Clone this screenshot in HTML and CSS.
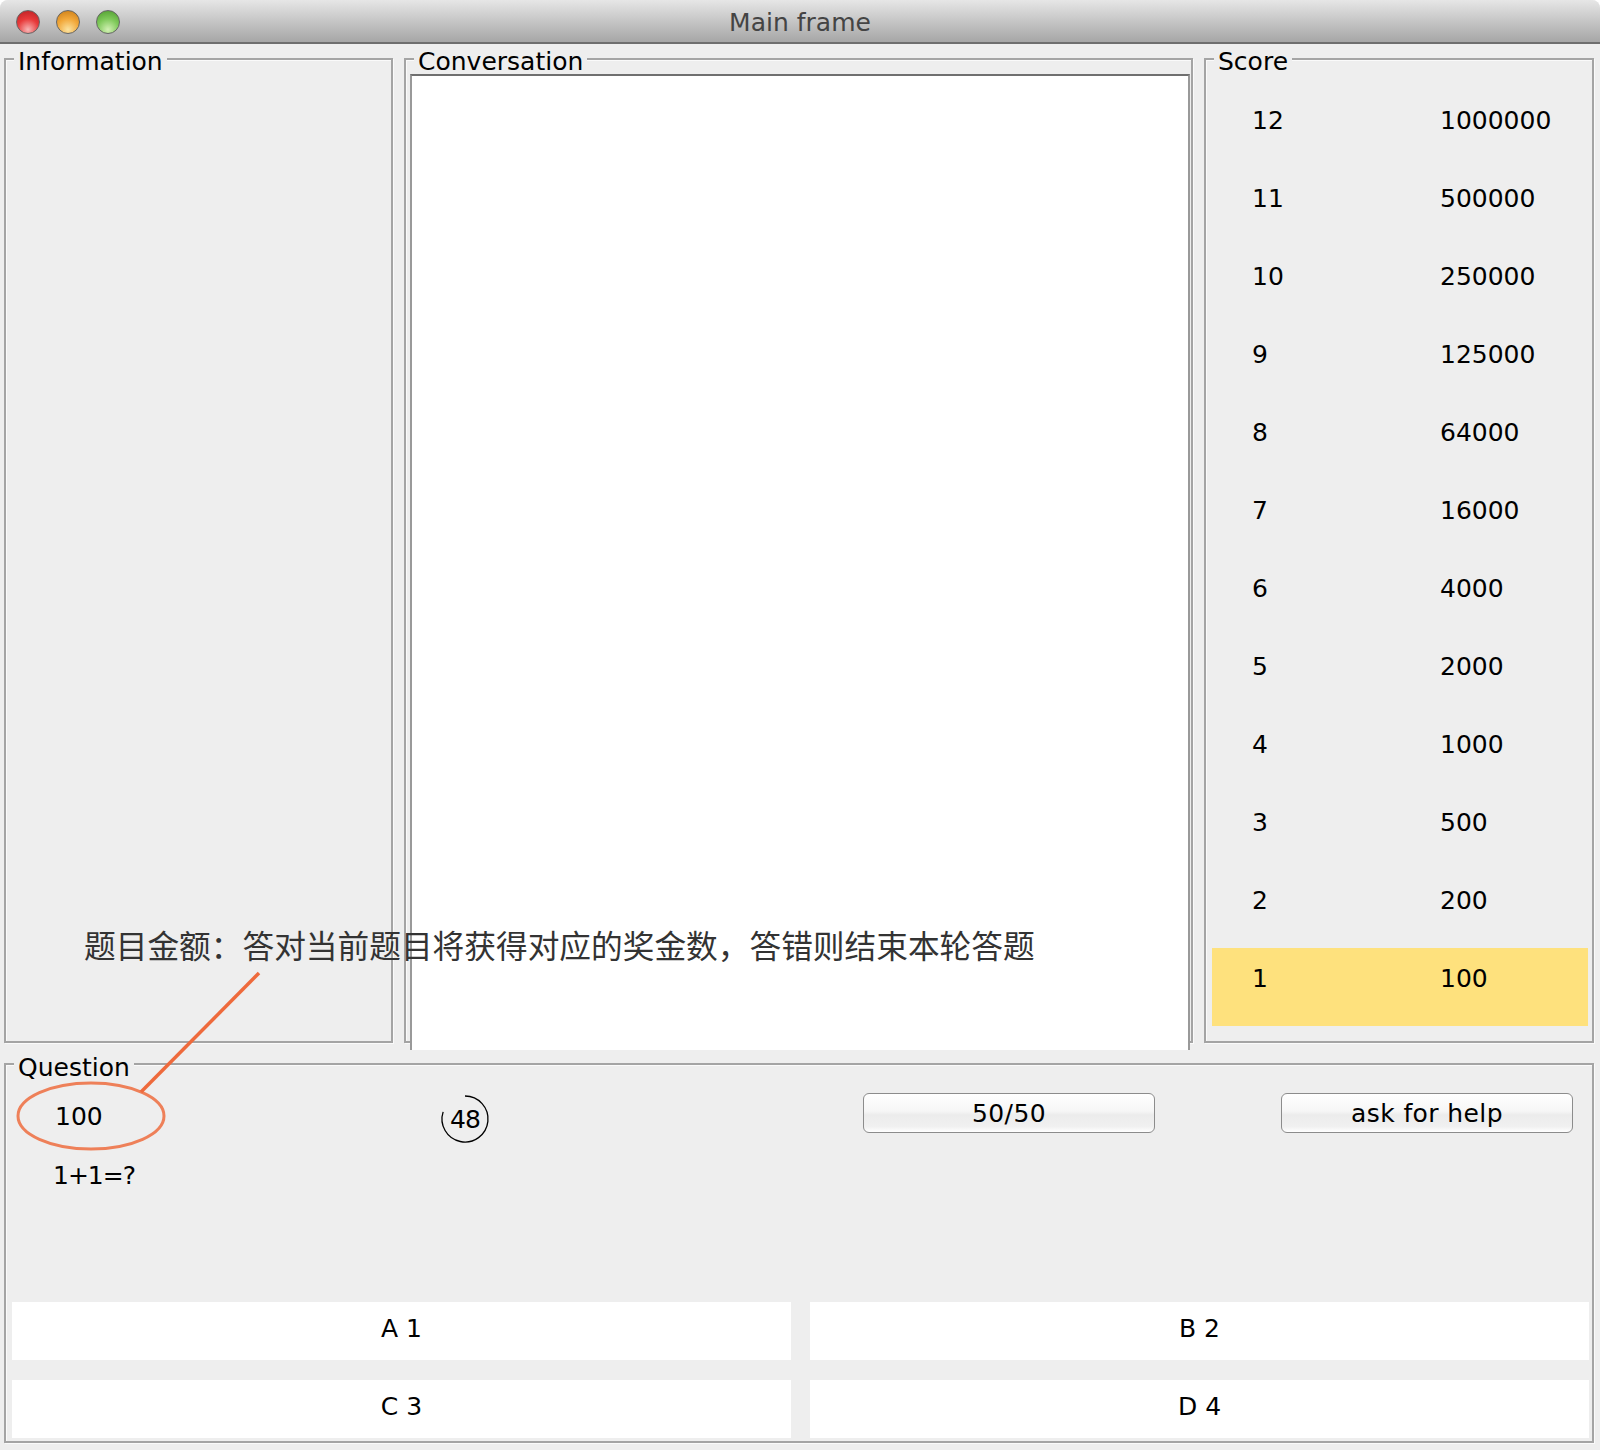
FILE: index.html
```html
<!DOCTYPE html>
<html lang="zh-CN">
<head>
    <meta charset="UTF-8">
    <meta name="viewport" content="width=device-width, initial-scale=1.0">
    <title>Main frame</title>
    <link rel="stylesheet" href="styles.css">
</head>
<body>
    <div class="window">
        <div class="titlebar">
            <div class="lights">
                <span class="light red"></span>
                <span class="light yellow"></span>
                <span class="light green"></span>
            </div>
            <div class="title">Main frame</div>
        </div>

        <div class="top">
            <div class="panel">
                <div class="panel-title">Information</div>
            </div>
            <div class="panel conversation">
                <div class="panel-title">Conversation</div>
                <div class="chat"></div>
            </div>
            <div class="panel score">
                <div class="panel-title">Score</div>
                <div class="row"><span>12</span><span>1000000</span></div>
                <div class="row"><span>11</span><span>500000</span></div>
                <div class="row"><span>10</span><span>250000</span></div>
                <div class="row"><span>9</span><span>125000</span></div>
                <div class="row"><span>8</span><span>64000</span></div>
                <div class="row"><span>7</span><span>16000</span></div>
                <div class="row"><span>6</span><span>4000</span></div>
                <div class="row"><span>5</span><span>2000</span></div>
                <div class="row"><span>4</span><span>1000</span></div>
                <div class="row"><span>3</span><span>500</span></div>
                <div class="row"><span>2</span><span>200</span></div>
                <div class="row current"><span>1</span><span>100</span></div>
            </div>
        </div>

        <div class="panel question">
            <div class="panel-title">Question</div>
            <div class="question-top">
                <div class="money">100</div>
                <svg class="timer" width="48" height="48" viewBox="0 0 48 48">
                    <path d="M24 1A23 23 0 1 1 2.13 16.9" fill="none" stroke="#000" stroke-width="1.3"/>
                    <text x="24" y="33">48</text>
                </svg>
                <button class="help" type="button">50/50</button>
                <button class="help" type="button">ask for help</button>
            </div>
            <div class="question-text">1+1=?</div>
            <div class="answers">
                <div class="answer">A 1</div>
                <div class="answer">B 2</div>
                <div class="answer">C 3</div>
                <div class="answer">D 4</div>
            </div>
        </div>

        <!-- annotation drawn over the screenshot -->
        <div class="note">题目金额：答对当前题目将获得对应的奖金数，答错则结束本轮答题</div>
        <svg class="note-marks" width="1600" height="1450" viewBox="0 0 1600 1450">
            <ellipse cx="91" cy="1116" rx="73" ry="33" fill="none" stroke="#ee8059" stroke-width="3"/>
            <path d="M259 973L141 1092" fill="none" stroke="#ee6a3c" stroke-width="3.5"/>
        </svg>
    </div>
</body>
</html>
```

FILE: styles.css
```css
body {
    margin: 0;
    background: #fff;
    font-family: "DejaVu Sans", sans-serif;
    font-size: 25px;
    color: #000;
}
.window {
    position: relative;
    width: 1600px;
    height: 1450px;
    background: #eee;
    border-radius: 8px 8px 0 0;
    overflow: hidden;
}
.titlebar {
    position: relative;
    height: 44px;
    box-sizing: border-box;
    border-bottom: 2px solid #6e6e6e;
    background: linear-gradient(#e6e6e6, #a6a6a6);
}
.lights {
    display: flex;
    gap: 16px;
    padding: 10px 0 0 16px;
}
.light {
    width: 24px;
    height: 24px;
    box-sizing: border-box;
    border-radius: 50%;
    border: 1px solid #666;
}
.red {
    background: radial-gradient(circle at 50% 85%, #f7b6b6, #e83a3a 50%, #b81e22);
}
.yellow {
    background: radial-gradient(circle at 50% 85%, #fbe3a0, #f2a83a 50%, #c87a14);
}
.green {
    background: radial-gradient(circle at 50% 85%, #d2f0b4, #7fc95a 50%, #4c9a2c);
}
.title {
    position: absolute;
    top: 0;
    left: 0;
    right: 0;
    text-align: center;
    line-height: 45px;
    color: #444;
}
.top {
    display: grid;
    grid-template-columns: 389px 789px 390px;
    gap: 11px;
    height: 985px;
    margin: 14px 0 0 4px;
}
.panel {
    position: relative;
    box-sizing: border-box;
    border: 2px solid #a4a4a4;
    box-shadow: inset 1px 1px 0 #fafafa, 1px 1px 0 #fafafa;
}
.panel-title {
    position: absolute;
    top: -10px;
    left: 8px;
    padding: 0 4px;
    line-height: 24px;
    background: #eee;
}
.conversation {
    display: flex;
    flex-direction: column;
    padding: 14px 1px 0 4px;
}
.chat {
    flex: 1;
    margin-bottom: -9px;
    background: #fff;
    border: 2px solid #999;
    border-top-color: #6f6f6f;
    border-bottom: 0;
}
.score {
    padding: 30px 4px 0 6px;
}
.row {
    display: grid;
    grid-template-columns: 188px 1fr;
    height: 78px;
    padding-left: 40px;
    line-height: 62px;
}
.current {
    background: #fee17d;
}
.question {
    display: flex;
    flex-direction: column;
    height: 380px;
    margin: 20px 0 0 4px;
    width: 1590px;
    padding: 28px 3px 3px 0;
}
.question .panel-title {
    top: -9px;
}
.question-top {
    display: grid;
    grid-template-columns: 435px 422px 418px 292px;
    align-items: start;
    height: 50px;
}
.money {
    padding-left: 49px;
    line-height: 48px;
}
.timer {
    margin-top: 2px;
    overflow: visible;
}
.timer text {
    font-family: "DejaVu Sans", sans-serif;
    font-size: 25px;
    letter-spacing: -1px;
    text-anchor: middle;
}
.help {
    width: 292px;
    height: 40px;
    padding: 0;
    border: 1px solid #8c8c8c;
    border-radius: 6px;
    background: linear-gradient(#fff, #f6f6f6 45%, #ececec 55%, #f0f0f0 85%, #fff);
    font: inherit;
    letter-spacing: 0.4px;
    color: #000;
}
.question-text {
    margin-top: 16px;
    padding-left: 47px;
    line-height: 33px;
    letter-spacing: -1px;
}
.answers {
    display: grid;
    grid-template-columns: 1fr 1fr;
    gap: 20px 19px;
    margin-top: auto;
    margin-left: 6px;
}
.answer {
    height: 58px;
    background: #fff;
    text-align: center;
    line-height: 54px;
}
.note {
    position: absolute;
    top: 922px;
    left: 84px;
    font-family: "Noto Sans CJK SC", sans-serif;
    font-size: 31.7px;
    line-height: 44px;
    color: #333;
    white-space: nowrap;
}
.note-marks {
    position: absolute;
    top: 0;
    left: 0;
}
```
